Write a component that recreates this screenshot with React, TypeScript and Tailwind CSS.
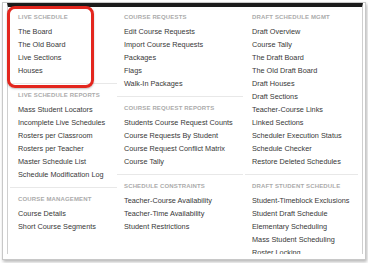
import React from "react";

type Section = { title: string; items: string[] };

const col1: Section[] = [
  { title: "Live Schedule", items: ["The Board", "The Old Board", "Live Sections", "Houses"] },
  {
    title: "Live Schedule Reports",
    items: [
      "Mass Student Locators",
      "Incomplete Live Schedules",
      "Rosters per Classroom",
      "Rosters per Teacher",
      "Master Schedule List",
      "Schedule Modification Log",
    ],
  },
  { title: "Course Management", items: ["Course Details", "Short Course Segments"] },
];

const col2: Section[] = [
  {
    title: "Course Requests",
    items: ["Edit Course Requests", "Import Course Requests", "Packages", "Flags", "Walk-In Packages"],
  },
  {
    title: "Course Request Reports",
    items: [
      "Students Course Request Counts",
      "Course Requests By Student",
      "Course Request Conflict Matrix",
      "Course Tally",
    ],
  },
  {
    title: "Schedule Constraints",
    items: ["Teacher-Course Availability", "Teacher-Time Availability", "Student Restrictions"],
  },
];

const col3: Section[] = [
  {
    title: "Draft Schedule Mgmt",
    items: [
      "Draft Overview",
      "Course Tally",
      "The Draft Board",
      "The Old Draft Board",
      "Draft Houses",
      "Draft Sections",
      "Teacher-Course Links",
      "Linked Sections",
      "Scheduler Execution Status",
      "Schedule Checker",
      "Restore Deleted Schedules",
    ],
  },
  {
    title: "Draft Student Schedule",
    items: [
      "Student-Timeblock Exclusions",
      "Student Draft Schedule",
      "Elementary Scheduling",
      "Mass Student Scheduling",
      "Roster Locking",
    ],
  },
];

function Column({ sections, className, pad }: { sections: Section[]; className: string; pad: string }) {
  return (
    <div className={className + " pt-[5px] flex flex-col"}>
      {sections.map((s, i) => (
        <div key={s.title} className="flex flex-col">
          {i > 0 && <div className="h-[13px] flex items-center"><div className="w-full h-px bg-[#e8e8e8]" /></div>}
          <div className={pad + " h-[13px] leading-[11px] text-[6px] font-bold uppercase tracking-[0.15px] text-[#ababab] whitespace-nowrap"}>
            {s.title}
          </div>
          {s.items.map((it) => (
            <div key={it} className={pad + " h-[13px] leading-[13px] text-[7.3px] text-[#383838] whitespace-nowrap"}>
              {it}
            </div>
          ))}
        </div>
      ))}
    </div>
  );
}

export default function App() {
  return (
    <div
      className="relative w-[368px] h-[263px] bg-white overflow-hidden pt-[2px] pl-[2px]"
      style={{ fontFamily: '"Liberation Sans", Arial, sans-serif' }}
    >
      <div className="w-[364px] h-[258px] bg-white border border-[#c8c8c8] shadow-[1px_2px_3px_rgba(0,0,0,0.28)] pl-[4px] pr-[2px] pb-[5px]">
        <div className="h-full bg-white border-l border-r border-[#cfcfcf] border-t-[4px] border-t-[#1c1c1c] overflow-hidden flex">
          <Column sections={col1} className="w-[109px] pl-[2px]" pad="pl-[8px]" />
          <Column sections={col2} className="w-[126px]" pad="pl-[7px]" />
          <Column sections={col3} className="flex-1 pl-[2px] pr-[4px]" pad="pl-[7px]" />
        </div>
      </div>
      <div className="absolute left-[7px] top-[6px] w-[87px] h-[82px] border-[3px] border-[#e3261e] rounded-[8px] shadow-[0_1px_2px_rgba(0,0,0,0.25)]" />
    </div>
  );
}
